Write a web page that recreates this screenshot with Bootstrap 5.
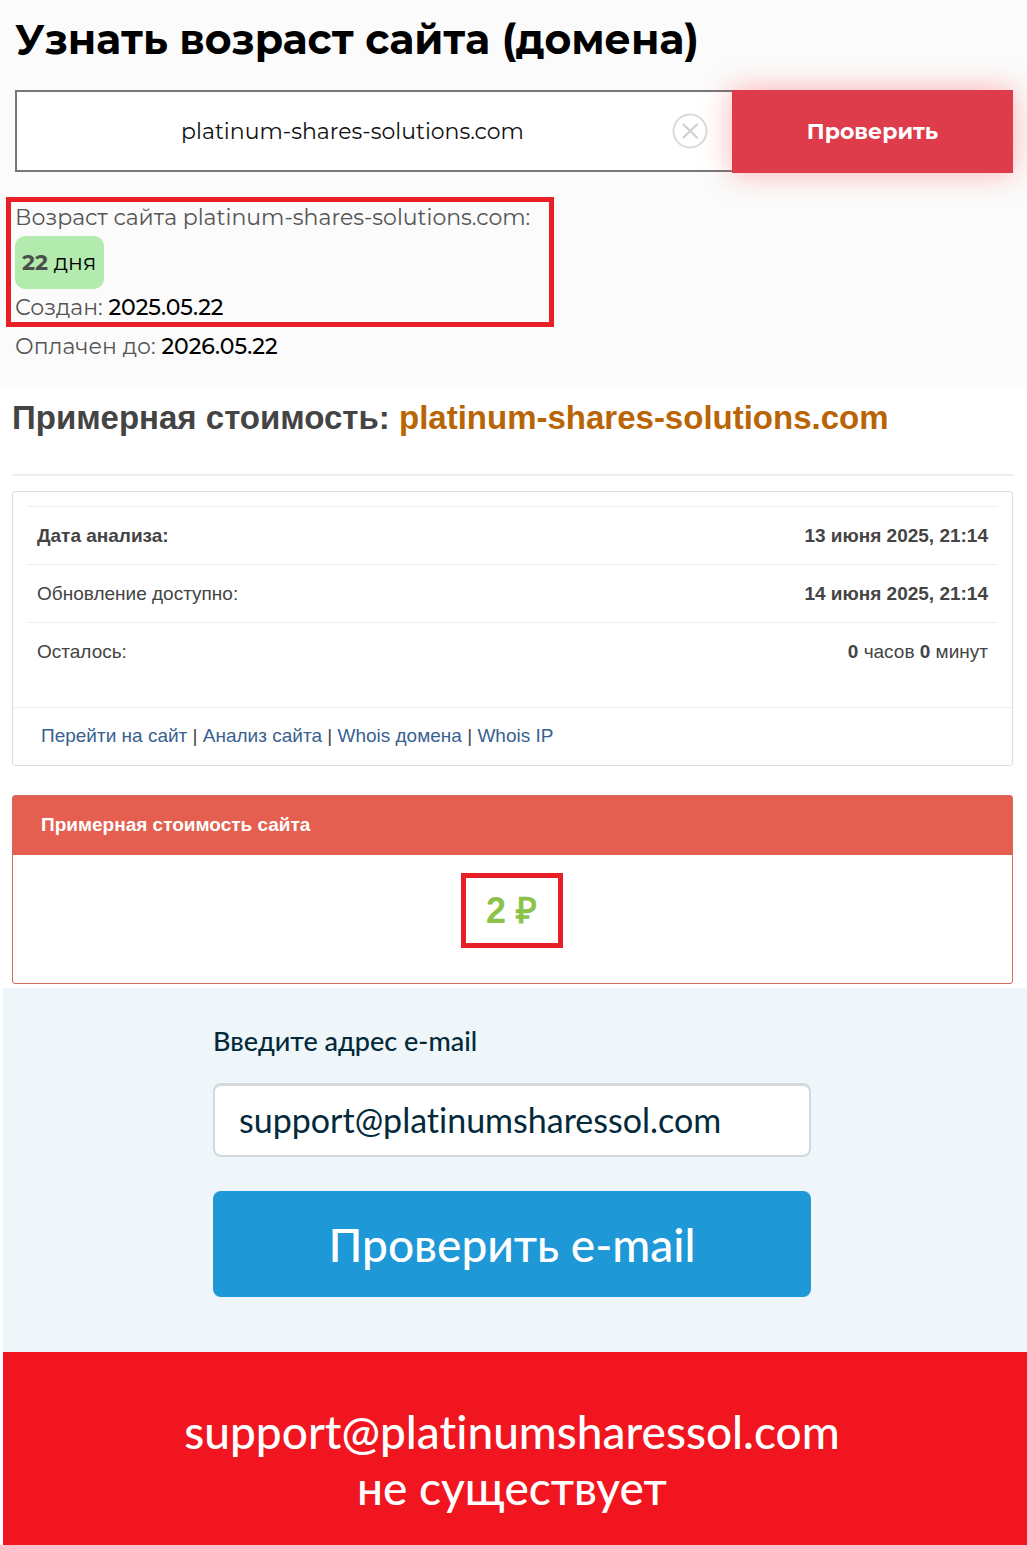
<!DOCTYPE html>
<html lang="ru">
<head>
<meta charset="utf-8">
<meta name="viewport" content="width=device-width, initial-scale=1">
<title>Проверка сайта</title>
<link href="https://cdn.jsdelivr.net/npm/bootstrap@5.3.0/dist/css/bootstrap.min.css" rel="stylesheet">
<style>
body{background:#fff;font-family:"Liberation Sans",Arial,sans-serif;color:#444}
/* Domain age */
.age-block{background:#fbfbfb;font-family:Montserrat,Inter,sans-serif;font-size:22px;line-height:28px;padding:14px 14px 24px 15px;color:#555}
.age-block h1{font-family:Montserrat,Inter,sans-serif;font-size:41px;line-height:50px;font-weight:700;color:#000;margin:0 0 26px}
.domain-box{border:2px solid #777;border-right:0;background:#fff;height:82px}
.domain-box input{border:0;background:none;font-size:22px;text-align:center;color:#111;padding:0 4px 0 20px}
.domain-box button{margin-right:24px;line-height:0}
.btn-check-age{width:281px;height:83px;border:0;border-radius:0;background:#df3c4b;color:#fff;font-size:22px;font-weight:700;box-shadow:0 0 30px rgba(255,60,60,.4)}
.btn-check-age:hover{background:#c93442;color:#fff}
.marked{border:5px solid #e91f27}
.age-result{width:548px;max-width:100%;margin:24px 0 0 -9px;padding:2px 4px 0}
.age-result p,.paid{margin:0}
.age-pill{display:inline-block;background:#b3ebae;color:#000;border-radius:10px;padding:13px 8px 12px 7px;margin:4px 0 5px}
.age-pill b{color:#4a4f4a}
.age-block strong{font-weight:500;color:#000}
.paid{padding-top:6px}
/* Site value */
.value-block{padding:12px 14px 4px 12px;font-size:19px;line-height:24px}
.value-block h2{font-size:33px;line-height:42px;font-weight:700;margin:0;padding-bottom:35px;border-bottom:2px solid #eee}
.value-block h2 span{color:#b96506}
.info-panel{border:1px solid #ddd;border-radius:3px;margin-top:15px}
.info-table{margin:14px 14px 27px;width:auto}
.info-table table{width:100%}
.info-table th,.info-table td{padding:17px 10px 16px;border-top:1px solid #eee;font-weight:400}
.info-table td{text-align:right}
.info-links{border-top:1px solid #eee;padding:16px 28px 17px}
.info-links a{color:#38618f;text-decoration:none}
.price-panel{border:1px solid #d6695d;border-radius:3px;margin-top:29px}
.price-panel h3{background:#e45f50;color:#fff;font-size:19px;line-height:24px;font-weight:700;margin:0;padding:17px 28px 18px}
.price-body{padding:18px 2px 35px 0}
.price-mark{width:102px;height:75px;font-size:36px;font-weight:700;color:#8bc34a}
/* E-mail check */
.mail-block{background:#eef6fa;margin-left:3px;padding:36px 6px 55px 0;font-family:Lato,sans-serif;font-variant-ligatures:none;color:#032a3a}
.mail-form{max-width:598px;margin:0 auto}
.mail-form label{font-size:27px;line-height:34px;font-weight:500;margin-bottom:25px}
.mail-form input{height:74px;border:2px solid #d5d9da;border-top-width:3px;border-radius:8px;font-size:34px;font-variant-ligatures:none;color:#032a3a;padding:0 24px 3px}
.mail-form button{height:106px;margin-top:34px;border:0;border-radius:8px;background:#1e98d7;color:#fff;font-size:46px;font-weight:500}
.mail-form button:hover{background:#1788c3;color:#fff}
.mail-error{background:#f11520;color:#fff;margin-left:3px;padding:52px 6px 29px 0;font-family:Lato,sans-serif;font-variant-ligatures:none;font-size:46px;line-height:56px;font-weight:500}
</style>
</head>
<body>
<section class="age-block">
  <h1>Узнать возраст сайта (домена)</h1>
  <form class="d-flex" onsubmit="return false">
    <div class="domain-box d-flex align-items-center flex-grow-1">
      <input class="form-control shadow-none" type="text" aria-label="Домен" value="platinum-shares-solutions.com">
      <button class="btn p-0 border-0" type="reset" aria-label="Очистить">
        <svg width="36" height="36" viewBox="0 0 36 36" fill="none"><circle cx="18" cy="18" r="16.5" stroke="#dadada" stroke-width="2"/><path d="M11.500 11.500l13.500 13M25 11.500l-13.500 13" stroke="#d0d0d0" stroke-width="2.200" stroke-linecap="round"/></svg>
      </button>
    </div>
    <button class="btn btn-check-age flex-shrink-0" type="submit">Проверить</button>
  </form>
  <div class="age-result marked">
    <p>Возраст сайта platinum-shares-solutions.com:</p>
    <div class="d-flex"><span class="age-pill"><b>22</b> дня</span></div>
    <p>Создан: <strong>2025.05.22</strong></p>
  </div>
  <p class="paid">Оплачен до: <strong>2026.05.22</strong></p>
</section>

<section class="value-block">
  <h2>Примерная стоимость: <span>platinum-shares-solutions.com</span></h2>
  <div class="info-panel">
    <div class="info-table">
      <table>
        <tr><th scope="row"><b>Дата анализа:</b></th><td><b>13 июня 2025, 21:14</b></td></tr>
        <tr><th scope="row">Обновление доступно:</th><td><b>14 июня 2025, 21:14</b></td></tr>
        <tr><th scope="row">Осталось:</th><td><b>0</b> часов <b>0</b> минут</td></tr>
      </table>
    </div>
    <div class="info-links"><a href="#">Перейти на сайт</a> | <a href="#">Анализ сайта</a> | <a href="#">Whois домена</a> | <a href="#">Whois IP</a></div>
  </div>
  <div class="price-panel">
    <h3>Примерная стоимость сайта</h3>
    <div class="price-body d-flex justify-content-center">
      <div class="price-mark marked d-flex align-items-center justify-content-center">2 ₽</div>
    </div>
  </div>
</section>

<section class="mail-block">
  <form class="mail-form" onsubmit="return false">
    <label class="d-block" for="mail">Введите адрес e-mail</label>
    <input class="form-control" id="mail" type="email" value="support@platinumsharessol.com">
    <button class="btn w-100" type="submit">Проверить e-mail</button>
  </form>
</section>
<section class="mail-error text-center" role="alert">support@platinumsharessol.com<br>не существует</section>
<script src="https://cdn.jsdelivr.net/npm/bootstrap@5.3.0/dist/js/bootstrap.bundle.min.js"></script>
</body>
</html>
